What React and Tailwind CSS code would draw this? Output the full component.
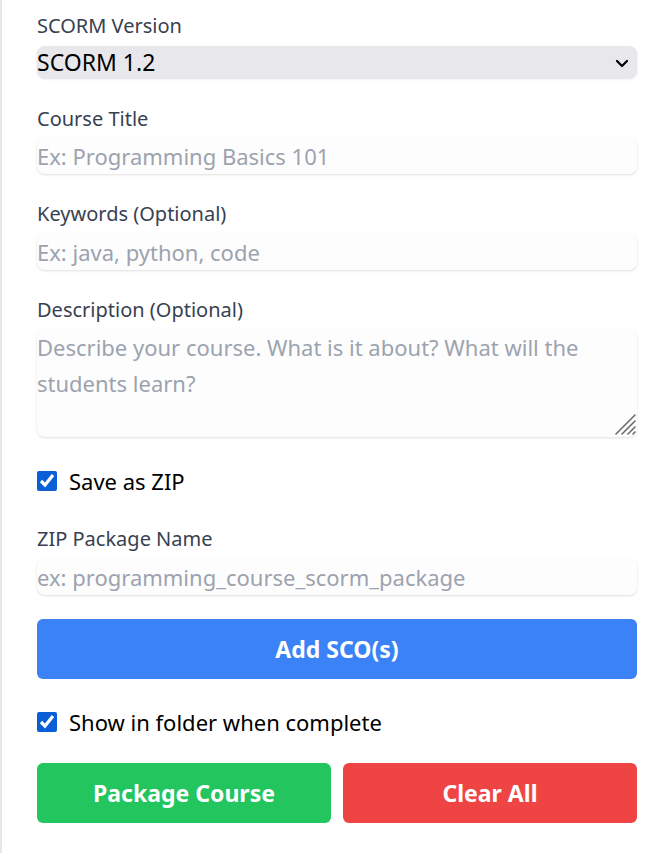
import React, { useState } from "react";

const font = { fontFamily: '"Segoe UI", "Noto Sans", "Open Sans", sans-serif' };

const Label = ({ children, className = "" }) => (
  <label className={`block text-[20px] leading-[27px] text-[#374151] ${className}`}>{children}</label>
);

export default function App() {
  const [saveZip, setSaveZip] = useState(true);
  const [showFolder, setShowFolder] = useState(true);

  const inputCls =
    "block w-full h-[37px] bg-[#fdfdfd] rounded-lg shadow-sm text-[22px] text-black placeholder:text-[#9ca3af] outline-none";

  return (
    <div className="min-h-[853px] bg-white border-l-2 border-[#e5e7eb] pl-[35px] pr-[35px] pt-3" style={font}>
      <Label>SCORM Version</Label>
      <div className="relative mt-[7px]">
        <select className="block w-full h-8 appearance-none bg-[#e8e8ec] rounded-lg shadow-sm text-[23px] leading-8 text-black outline-none pr-8">
          <option>SCORM 1.2</option>
          <option>SCORM 2004</option>
        </select>
        <svg className="absolute right-[7px] top-[9px] w-4 h-4 pointer-events-none" viewBox="0 0 16 16" fill="none" stroke="black" strokeWidth="2.2" strokeLinecap="round" strokeLinejoin="round">
          <path d="M3 6l5 5 5-5" />
        </svg>
      </div>

      <Label className="mt-[27px]">Course Title</Label>
      <input className={`${inputCls} mt-[5px]`} placeholder="Ex: Programming Basics 101" />

      <Label className="mt-[26px]">Keywords (Optional)</Label>
      <input className={`${inputCls} mt-[6px]`} placeholder="Ex: java, python, code" />

      <Label className="mt-[26px]">Description (Optional)</Label>
      <div className="relative mt-[6px]">
        <textarea
          className="block w-full h-[108px] bg-[#fdfdfd] rounded-lg shadow-sm resize-none text-[22px] leading-[36px] text-black placeholder:text-[#9ca3af] outline-none"
          placeholder="Describe your course. What is it about? What will the students learn?"
        />
        <svg className="absolute right-[1px] bottom-[2px] w-[22px] h-[22px] pointer-events-none" viewBox="0 0 22 22" stroke="#6b6b6b" strokeWidth="1.6" strokeLinecap="round">
          <path d="M21 2L2 21M21 8L8 21M21 14L14 21M21 19L19 21" />
        </svg>
      </div>

      <label className="flex items-center h-[30px] mt-[29px] text-[22px] text-black">
        <input type="checkbox" checked={saveZip} onChange={() => setSaveZip(!saveZip)} className="w-5 h-5 accent-[#0b5fd6]" />
        <span className="ml-3">Save as ZIP</span>
      </label>

      <Label className="mt-[29px]">ZIP Package Name</Label>
      <input className={`${inputCls} h-[36px] mt-[6px]`} placeholder="ex: programming_course_scorm_package" />

      <button className="block w-full h-[60px] mt-6 bg-[#3b82f6] rounded-md text-white font-bold text-[23px]">
        Add SCO(s)
      </button>

      <label className="flex items-center h-[30px] mt-7 text-[22px] text-black">
        <input type="checkbox" checked={showFolder} onChange={() => setShowFolder(!showFolder)} className="w-5 h-5 accent-[#0b5fd6]" />
        <span className="ml-3">Show in folder when complete</span>
      </label>

      <div className="flex gap-3 mt-[26px]">
        <button className="flex-1 h-[60px] bg-[#22c55e] rounded-md text-white font-bold text-[23px]">Package Course</button>
        <button className="flex-1 h-[60px] bg-[#ef4444] rounded-md text-white font-bold text-[23px]">Clear All</button>
      </div>
    </div>
  );
}
